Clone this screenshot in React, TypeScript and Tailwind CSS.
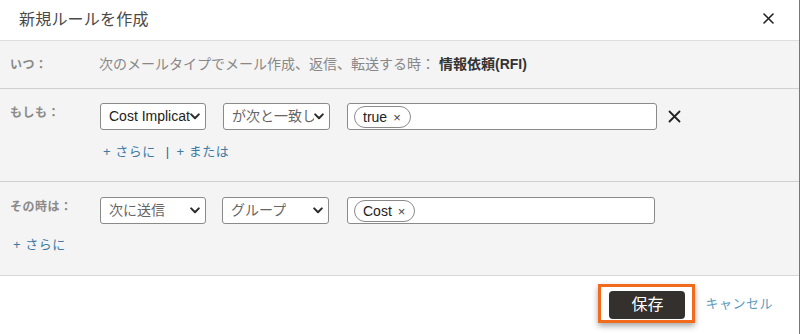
import { ReactNode } from "react";

const font = "font-['Liberation_Sans','Noto_Sans_CJK_JP',sans-serif]";

function Chevron() {
  return (
    <svg width="10" height="7" viewBox="0 0 10 7" fill="none" className="shrink-0">
      <path d="M1.2 1.4 5 5.2 8.8 1.4" stroke="#2b2b2b" strokeWidth="2" strokeLinecap="round" strokeLinejoin="round" />
    </svg>
  );
}

function Select({ children, width, dark }: { children: ReactNode; width: string; dark?: boolean }) {
  return (
    <div
      className={`${width} h-[27px] shrink-0 flex items-center justify-between pl-2 pr-[5px] bg-white border border-[#8a8a8a] rounded-[3px] text-[14px] ${dark ? "text-[#222]" : "text-[#666]"}`}
    >
      <span className="overflow-hidden whitespace-nowrap">{children}</span>
      <Chevron />
    </div>
  );
}

function Chip({ label }: { label: string }) {
  return (
    <span className="h-[22px] flex items-center gap-[6px] pl-[8px] pr-[9px] border border-[#8a8a8a] rounded-full text-[14px] text-[#222] bg-white">
      {label}
      <span className="text-[13px] leading-none text-[#444]">×</span>
    </span>
  );
}

function TagInput({ label, width }: { label: string; width: string }) {
  return (
    <div className={`${width} h-[27px] shrink-0 flex items-end pb-px pl-[6px] bg-white border border-[#8a8a8a] rounded-[3px]`}>
      <Chip label={label} />
    </div>
  );
}

function Label({ children }: { children: ReactNode }) {
  return (
    <div className="w-[100px] shrink-0 pl-[10px] text-[12px] leading-[16px] font-bold text-[#8a8a8a] tracking-[0.5px]">
      {children}
    </div>
  );
}

export default function App() {
  return (
    <div className={`w-[800px] h-[334px] bg-white border-r border-[#777] flex flex-col ${font}`}>
      <header className="h-[41px] shrink-0 flex items-center justify-between pl-[19px] pr-[25px] border-b border-[#dedede]">
        <h1 className="text-[16px] text-[#4a4a4a] tracking-[0.2px]">新規ルールを作成</h1>
        <svg width="11" height="11" viewBox="0 0 11 11" className="mt-[-4px]">
          <path d="M1 1 10 10M10 1 1 10" stroke="#222" strokeWidth="1.6" strokeLinecap="round" />
        </svg>
      </header>

      <section className="h-[48px] shrink-0 flex items-center bg-[#f4f4f4] border-b border-[#d0d0d0]">
        <Label>いつ：</Label>
        <p className="text-[14px] text-[#888] whitespace-nowrap ml-[-1px]">
          次のメールタイプでメール作成、返信、転送する時：
          <span className="ml-[4px] font-bold text-[#333]">情報依頼(RFI)</span>
        </p>
      </section>

      <section className="h-[93px] shrink-0 pt-[14px] bg-[#f4f4f4] border-b border-[#d0d0d0]">
        <div className="flex items-start">
          <div className="mt-[2px]">
            <Label>もしも：</Label>
          </div>
          <div className="flex items-center gap-[17px]">
            <Select width="w-[106px]" dark>Cost Implicat</Select>
            <Select width="w-[107px]">が次と一致し</Select>
            <div className="flex items-center gap-[11px]">
              <TagInput label="true" width="w-[310px]" />
              <svg width="13" height="13" viewBox="0 0 13 13">
                <path d="M1.5 1.5 11.5 11.5M11.5 1.5 1.5 11.5" stroke="#222" strokeWidth="1.8" strokeLinecap="round" />
              </svg>
            </div>
          </div>
        </div>
        <div className="mt-[14px] pl-[103px] flex items-center text-[13px] leading-[16px] text-[#3f7aa3] tracking-[0.5px]">
          <span>+ さらに</span>
          <span className="ml-[10px] mr-[7px] text-[#2f6890]">|</span>
          <span>+ または</span>
        </div>
      </section>

      <section className="h-[94px] shrink-0 pt-[15px] bg-[#f4f4f4] border-b border-[#d8d8d8]">
        <div className="flex items-start">
          <div className="mt-[2px]">
            <Label>その時は：</Label>
          </div>
          <div className="flex items-center gap-[16px]">
            <Select width="w-[106px]">次に送信</Select>
            <div className="mr-[2px]">
              <Select width="w-[107px]">グループ</Select>
            </div>
            <TagInput label="Cost" width="w-[308px]" />
          </div>
        </div>
        <div className="mt-[13px] pl-[13px] text-[13px] leading-[16px] text-[#3f7aa3] tracking-[0.5px]">+ さらに</div>
      </section>

      <footer className="flex-1 flex items-start justify-end pt-[8px] pr-[26px]">
        <div className="flex items-center gap-[10px]">
          <div className="border-[3px] border-[#f26a1b] pl-[8px] pr-[7px] pt-[4px] pb-px shadow-[0_3px_6px_rgba(0,0,0,0.35)]">
            <button className="w-[76px] h-[28px] rounded-[4px] bg-[#33302e] text-white text-[16px] leading-none">
              保存
            </button>
          </div>
          <span className="text-[13px] text-[#5e9cbd] tracking-[0.5px]">キャンセル</span>
        </div>
      </footer>
    </div>
  );
}
